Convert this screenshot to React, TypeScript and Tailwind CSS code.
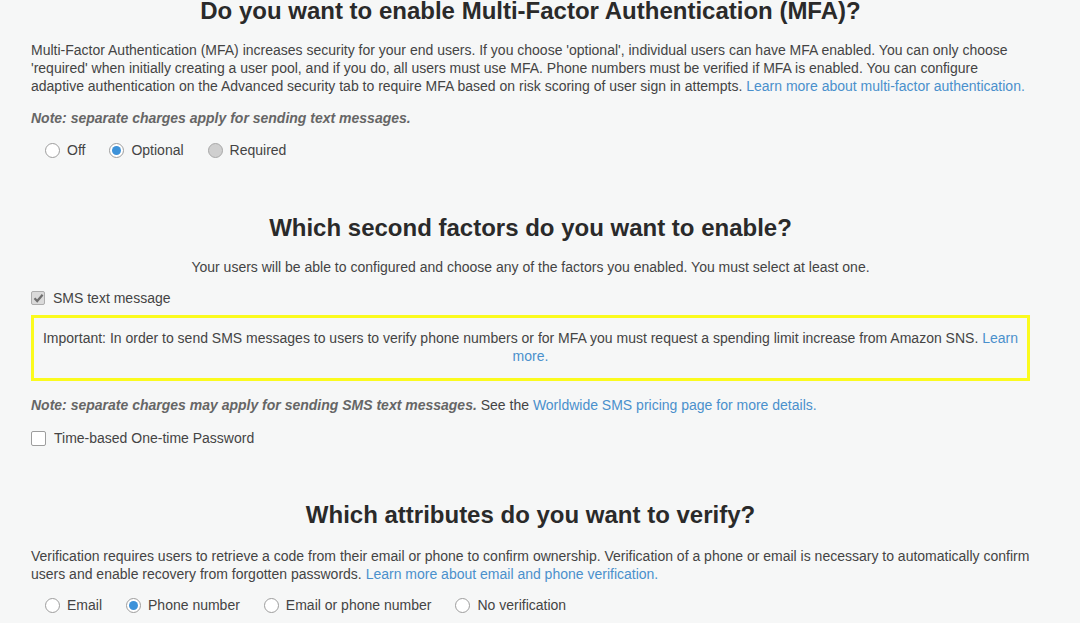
import type { ReactNode } from "react";

function Radio({ label, checked = false, disabled = false }: { label: string; checked?: boolean; disabled?: boolean }) {
  return (
    <label className="flex items-center gap-[7px] h-[18px]">
      <span
        className={
          disabled
            ? "w-[15px] h-[15px] rounded-full border border-[#a8a8a8] bg-[#cfcfcf]"
            : "w-[15px] h-[15px] rounded-full border border-[#9d9d9d] bg-white flex items-center justify-center"
        }
      >
        {checked && <span className="w-[9px] h-[9px] rounded-full bg-[#3d92d9]" />}
      </span>
      <span>{label}</span>
    </label>
  );
}

function Checkbox({ label, checked = false }: { label: string; checked?: boolean }) {
  return (
    <label className="flex items-center gap-[8px] h-[18px]">
      {checked ? (
        <span className="w-[14px] h-[14px] rounded-[2px] border border-[#adadad] bg-[#dadada] flex items-center justify-center">
          <svg width="11" height="10" viewBox="0 0 11 10">
            <path d="M1.5 5.2 L4.2 8 L9.6 1.8" fill="none" stroke="#6f6f6f" strokeWidth="2.2" />
          </svg>
        </span>
      ) : (
        <span className="w-[15px] h-[15px] rounded-[2px] border border-[#9d9d9d] bg-white" />
      )}
      <span>{label}</span>
    </label>
  );
}

function Link({ children }: { children: ReactNode }) {
  return <a className="text-[#4a90cc] cursor-pointer">{children}</a>;
}

function Heading({ children, className = "" }: { children: ReactNode; className?: string }) {
  return (
    <h2 className={`text-center text-[24px] leading-[22px] font-bold text-[#2a2a2a] ${className}`}>
      {children}
    </h2>
  );
}

export default function App() {
  return (
    <div className="min-h-screen bg-[#f6f7f7] font-['Liberation_Sans',Arial,sans-serif] text-[14px] leading-[18px] text-[#444]">
      <div className="ml-[31px] w-[999px]">
        <Heading>Do you want to enable Multi-Factor Authentication (MFA)?</Heading>
        <p className="mt-[19px]">
          Multi-Factor Authentication (MFA) increases security for your end users. If you choose 'optional', individual
          users can have MFA enabled. You can only choose 'required' when initially creating a user pool, and if you do,
          all users must use MFA. Phone numbers must be verified if MFA is enabled. You can configure adaptive
          authentication on the Advanced security tab to require MFA based on risk scoring of user sign in attempts.{" "}
          <Link>Learn more about multi-factor authentication.</Link>
        </p>
        <p className="mt-[14px] italic font-bold text-[#666]">Note: separate charges apply for sending text messages.</p>
        <div className="mt-[14px] pl-[14px] flex gap-[24px]">
          <Radio label="Off" />
          <Radio label="Optional" checked />
          <Radio label="Required" disabled />
        </div>

        <Heading className="mt-[58px]">Which second factors do you want to enable?</Heading>
        <p className="mt-[19px] text-center">
          Your users will be able to configured and choose any of the factors you enabled. You must select at least one.
        </p>
        <div className="mt-[13px]">
          <Checkbox label="SMS text message" checked />
        </div>
        <div className="mt-[8px] border-[3px] border-[#fbfb1e] px-[8px] pt-[11px] pb-[13px] text-center">
          Important: In order to send SMS messages to users to verify phone numbers or for MFA you must request a
          spending limit increase from Amazon SNS.{" "}
          <Link>
            Learn
            <br />
            more.
          </Link>
        </div>
        <p className="mt-[15px]">
          <span className="italic font-bold text-[#666]">Note: separate charges may apply for sending SMS text messages.</span>{" "}
          See the <Link>Worldwide SMS pricing page for more details.</Link>
        </p>
        <div className="mt-[15px]">
          <Checkbox label="Time-based One-time Password" />
        </div>

        <Heading className="mt-[57px]">Which attributes do you want to verify?</Heading>
        <p className="mt-[21px]">
          Verification requires users to retrieve a code from their email or phone to confirm ownership. Verification
          of a phone or email is necessary to automatically confirm users and enable recovery from forgotten passwords.{" "}
          <Link>Learn more about email and phone verification.</Link>
        </p>
        <div className="mt-[13px] pl-[14px] flex gap-[24px]">
          <Radio label="Email" />
          <Radio label="Phone number" checked />
          <Radio label="Email or phone number" />
          <Radio label="No verification" />
        </div>
      </div>
    </div>
  );
}
